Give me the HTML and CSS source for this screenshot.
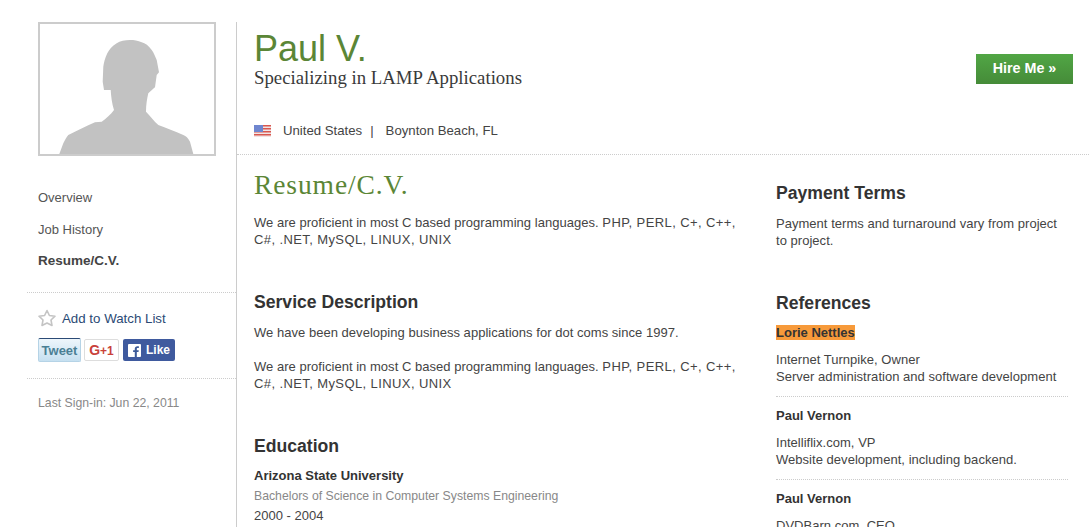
FILE: index.html
```html
<!DOCTYPE html>
<html lang="en">
<head>
    <meta charset="UTF-8">
    <title>Paul V. - Resume/C.V.</title>
    <link rel="stylesheet" href="styles.css">
</head>
<body>
    <div class="page">
        <div class="sidebar">
            <div class="photo">
                <svg width="174" height="130" viewBox="0 0 174 130">
                    <path fill="#c2c2c2" d="M90 16 C85 16 80 17 76.700 19.300 C72 22 69 26 67.300 29.300 C65 34 64 38 63.300 42.700 L62.700 57.700 L64 66 L70.700 66 C71 72 72 80 74 86 C71 90 66 95 61.700 97.700 L55 98.300 C46 102 37 107 28.300 111 C26 114 25 116 23.300 119.300 L19.300 130 L153.300 130 L150 117.700 C148 114 146 112 143.300 111 C135 107 126 104 118.300 101 C114 97 110 92 106 87.700 C106 81 107 75 108.300 69.300 C111 67 113 65 115 63.300 L116.700 51 L119 48.300 L116.700 36 C115 32 114 29 111.700 26 C109 22 105 19 101.700 18.300 C98 16.500 94 16 90 16 Z"/>
                </svg>
            </div>
            <ul class="side-nav">
                <li>Overview</li>
                <li>Job History</li>
                <li class="active">Resume/C.V.</li>
            </ul>
            <div class="watch-box">
                <div class="watch">
                    <svg width="18" height="18" viewBox="0 0 18 18">
                        <path fill="#fff" stroke="#c4c4c4" stroke-width="1.600" stroke-linejoin="round" d="M9 1.500 L11.400 6.500 L17 7.200 L13 11 L14 16.500 L9 14 L4 16.500 L5 11 L1 7.200 L6.600 6.500 Z"/>
                    </svg>
                    <a class="watch-link">Add to Watch List</a>
                </div>
                <div class="social">
                    <span class="btn-tweet">Tweet</span>
                    <span class="btn-gplus">G<small>+1</small></span>
                    <span class="btn-like">
                        <svg width="13" height="13" viewBox="0 0 14 14">
                            <rect width="14" height="14" rx="1" fill="#fff"/>
                            <path fill="#3b5998" d="M9.500 14 V8.700 H11.300 L11.600 6.600 H9.500 V5.300 C9.500 4.700 9.700 4.300 10.500 4.300 H11.700 V2.400 C11.400 2.400 10.800 2.300 10.100 2.300 C8.500 2.300 7.300 3.300 7.300 5.100 V6.600 H5.500 V8.700 H7.300 V14 Z"/>
                        </svg>
                        Like
                    </span>
                </div>
            </div>
            <div class="last-signin">Last Sign-in: Jun 22, 2011</div>
        </div>
        <div class="main">
            <div class="header">
                <div class="header-info">
                    <h1>Paul V.</h1>
                    <div class="tagline">Specializing in LAMP Applications</div>
                    <div class="location">
                        <svg width="17" height="12" viewBox="0 0 17 12">
                            <rect width="17" height="12" fill="#f0e4e4"/>
                            <path fill="#d9574f" d="M0 0 H17 V1.500 H0 Z M0 3 H17 V4.500 H0 Z M0 6 H17 V7.500 H0 Z M0 9 H17 V10.500 H0 Z"/>
                            <rect width="9" height="7" fill="#6f86cf"/>
                        </svg>
                        <span class="country">United States</span>
                        <span class="sep">|</span>
                        <span>Boynton Beach, FL</span>
                    </div>
                </div>
                <a class="hire-btn">Hire Me »</a>
            </div>
            <div class="columns">
                <div class="col-left">
                    <h2 class="page-title">Resume/C.V.</h2>
                    <p class="intro">We are proficient in most C based programming languages. <span class="caps">PHP, PERL, C+, C++, C#, .NET, MySQL, LINUX, UNIX</span></p>
                    <h3 class="service-head">Service Description</h3>
                    <p>We have been developing business applications for dot coms since 1997.</p>
                    <p class="second">We are proficient in most C based programming languages. <span class="caps">PHP, PERL, C+, C++, C#, .NET, MySQL, LINUX, UNIX</span></p>
                    <h3 class="edu-head">Education</h3>
                    <div class="school">Arizona State University</div>
                    <div class="degree">Bachelors of Science in Computer Systems Engineering</div>
                    <div class="years">2000 - 2004</div>
                </div>
                <div class="col-right">
                    <h3 class="terms-head">Payment Terms</h3>
                    <p>Payment terms and turnaround vary from project to project.</p>
                    <h3 class="ref-head">References</h3>
                    <div class="ref">
                        <div class="ref-name"><span class="hl">Lorie Nettles</span></div>
                        <p>Internet Turnpike, Owner<br>Server administration and software development</p>
                    </div>
                    <div class="ref">
                        <div class="ref-name">Paul Vernon</div>
                        <p>Intelliflix.com, VP<br>Website development, including backend.</p>
                    </div>
                    <div class="ref">
                        <div class="ref-name">Paul Vernon</div>
                        <p>DVDBarn.com, CEO</p>
                    </div>
                </div>
            </div>
        </div>
    </div>
</body>
</html>
```

FILE: styles.css
```css
html, body {
    margin: 0;
    height: 527px;
    overflow: hidden;
    background: #fff;
}
body {
    font-family: "Liberation Sans", Arial, sans-serif;
    font-size: 13px;
    line-height: 17px;
    color: #444;
}
p {
    margin: 0;
    letter-spacing: 0.030px;
}
.caps {
    letter-spacing: 0.400px;
}
.page {
    display: flex;
    padding: 22px 0 0 27px;
}
.sidebar {
    width: 209px;
    height: 505px;
    flex-shrink: 0;
    border-right: 1px solid #ccc;
}
.photo {
    width: 174px;
    height: 130px;
    margin-left: 11px;
    border: 2px solid #ccc;
    overflow: hidden;
}
.photo svg {
    display: block;
}
.side-nav {
    list-style: none;
    margin: 0;
    padding: 33px 0 23px 11px;
    border-bottom: 1px dotted #ccc;
    color: #555;
}
.side-nav li {
    margin-bottom: 15px;
}
.side-nav li:nth-child(2) {
    margin-bottom: 14px;
}
.side-nav li:last-child {
    margin-bottom: 0;
}
.side-nav .active {
    font-size: 13.500px;
    font-weight: bold;
    color: #444;
}
.watch-box {
    padding: 16px 0 16px 11px;
    border-bottom: 1px dotted #ccc;
}
.watch {
    display: flex;
    align-items: center;
    gap: 6px;
}
.watch-link {
    color: #2b4a75;
    font-size: 13.300px;
}
.social {
    display: flex;
    align-items: center;
    gap: 3px;
    margin-top: 11px;
}
.btn-tweet {
    width: 43px;
    height: 24px;
    box-sizing: border-box;
    border: 1px solid #b5d3e6;
    border-top: 1px solid #2b4a75;
    border-radius: 2px;
    background: linear-gradient(#eef6fb, #c6e0f0);
    color: #4a7f94;
    font-size: 13px;
    font-weight: bold;
    line-height: 24px;
    text-align: center;
}
.btn-gplus {
    width: 35px;
    height: 22px;
    box-sizing: border-box;
    border: 1px solid #ddd;
    border-radius: 2px;
    color: #c9413a;
    font-size: 14px;
    font-weight: bold;
    line-height: 20px;
    text-align: center;
}
.btn-gplus small {
    font-size: 12px;
}
.btn-like {
    display: flex;
    align-items: center;
    gap: 5px;
    width: 52px;
    height: 22px;
    margin-left: 1px;
    box-sizing: border-box;
    padding-left: 5px;
    border-radius: 2px;
    background: #3f5a9e;
    color: #fff;
    font-size: 12px;
    font-weight: bold;
}
.last-signin {
    padding: 16px 0 0 11px;
    font-size: 12.250px;
    color: #888;
}
.main {
    flex: 1;
}
.header {
    display: flex;
    justify-content: space-between;
    height: 132px;
    border-bottom: 1px dotted #ccc;
}
.header-info {
    padding-left: 17px;
}
h1 {
    margin: 8px 0 0;
    font-size: 36px;
    font-weight: normal;
    line-height: 37px;
    color: #5b8636;
}
.tagline {
    font-family: "Liberation Serif", "Times New Roman", serif;
    font-size: 18.800px;
    line-height: 22px;
    color: #3a3a3a;
}
.location {
    display: flex;
    align-items: center;
    margin-top: 33px;
    font-size: 13.200px;
}
.location svg {
    margin-right: 12px;
}
.sep {
    margin: 0 12px 0 8px;
}
.hire-btn {
    width: 97px;
    height: 30px;
    margin: 32px 16px 0 0;
    background: linear-gradient(#51a645, #458b38);
    color: #fff;
    font-size: 14.300px;
    font-weight: bold;
    line-height: 28px;
    text-align: center;
}
.columns {
    display: flex;
}
.col-left {
    width: 486px;
    padding: 15px 0 0 17px;
    flex-shrink: 0;
}
.col-right {
    width: 293px;
    padding: 27px 0 0 36px;
}
.page-title {
    margin: 0;
    font-family: "Liberation Serif", "Times New Roman", serif;
    font-size: 27.500px;
    font-weight: normal;
    letter-spacing: 0.900px;
    line-height: 30px;
    color: #5b8636;
}
.intro {
    margin-top: 14px;
}
h3 {
    margin: 0;
    font-size: 17.600px;
    line-height: 22px;
    color: #333;
}
.service-head {
    margin-top: 43px;
    margin-bottom: 11px;
}
.second {
    margin-top: 17px;
}
.edu-head {
    margin-top: 43px;
    margin-bottom: 10px;
}
.school {
    font-weight: bold;
    color: #333;
}
.degree {
    margin-top: 4px;
    font-size: 12.250px;
    color: #888;
}
.years {
    margin-top: 2px;
}
.terms-head {
    margin-bottom: 11px;
}
.ref-head {
    margin-top: 43px;
    margin-bottom: 10px;
}
.ref {
    margin-right: 1px;
    padding-bottom: 11px;
    margin-bottom: 10px;
    border-bottom: 1px dotted #ccc;
}
.ref-name {
    font-weight: bold;
    color: #333;
    margin-bottom: 10px;
}
.hl {
    background: #f79a3a;
}
```
